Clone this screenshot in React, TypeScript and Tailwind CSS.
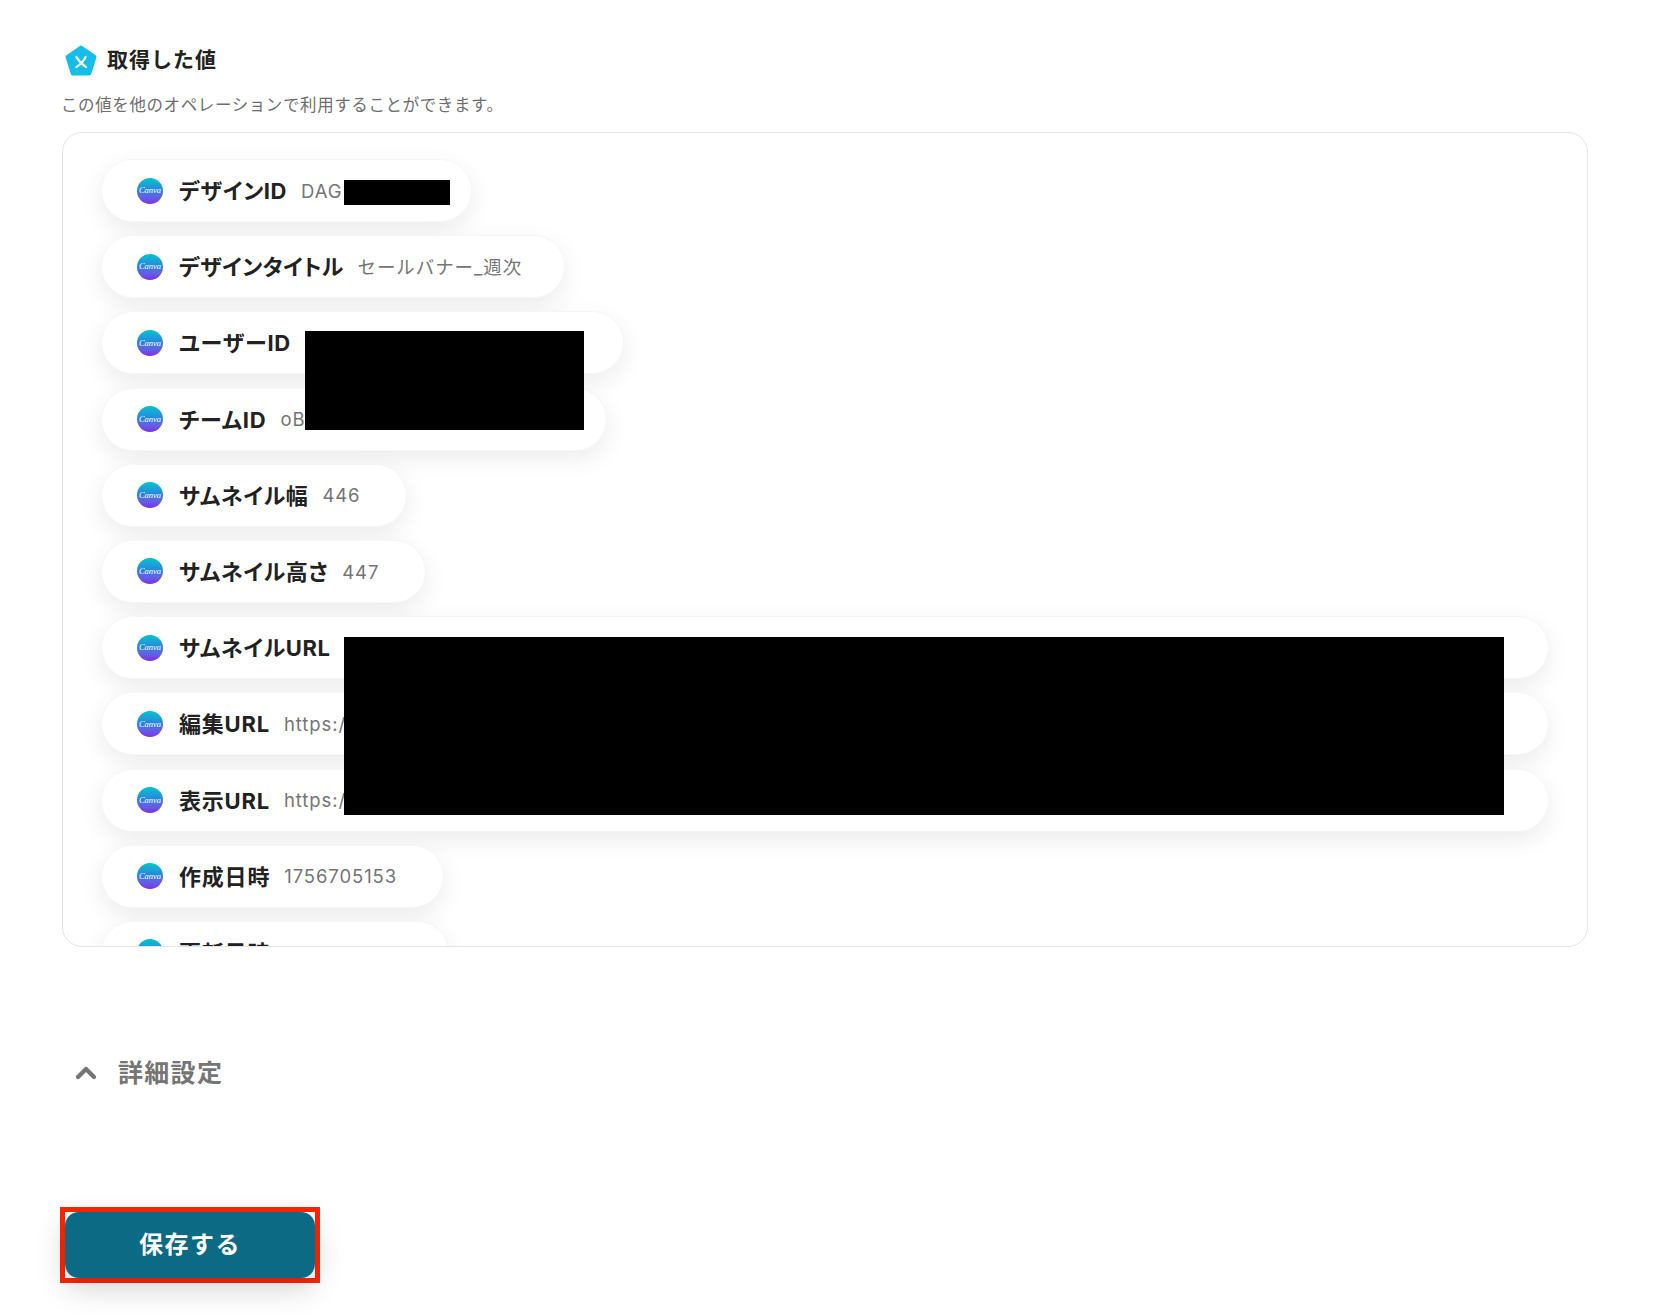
import React from 'react';
import { ChevronUp } from 'lucide-react';

const rows = [
  { label: 'デザインID', value: 'DAG', width: 'w-[371px]', tracking: 'tracking-[0.6px]' },
  { label: 'デザインタイトル', value: 'セールバナー_週次', width: 'w-[464px]', tracking: 'tracking-[0.3px]' },
  { label: 'ユーザーID', value: '', width: 'w-[523px]', tracking: 'tracking-[0.8px]' },
  { label: 'チームID', value: 'oB', width: 'w-[506px]', tracking: 'tracking-[0.8px]' },
  { label: 'サムネイル幅', value: '446', width: 'w-fit', tracking: 'tracking-[0.6px]' },
  { label: 'サムネイル高さ', value: '447', width: 'w-fit', tracking: 'tracking-[0.6px]' },
  { label: 'サムネイルURL', value: '', width: 'w-full', tracking: 'tracking-[0.6px]' },
  { label: '編集URL', value: 'https:/', width: 'w-full', tracking: 'tracking-[0.8px]' },
  { label: '表示URL', value: 'https:/', width: 'w-full', tracking: 'tracking-[0.8px]' },
  { label: '作成日時', value: '1756705153', width: 'w-fit', tracking: 'tracking-[0.8px]' },
  { label: '更新日時', value: '1756708800', width: 'w-fit', tracking: 'tracking-[0.8px]' },
];

const CanvaIcon = () => (
  <span className="flex h-[26px] w-[26px] shrink-0 items-center justify-center rounded-full bg-gradient-to-b from-[#00c4cc] via-[#2a7fe0] to-[#7d2ae8]">
    <span className="font-['Liberation_Serif',serif] text-[8.5px] leading-none text-white italic">Canva</span>
  </span>
);

export default function App() {
  return (
    <div className="min-h-[1314px] bg-white pt-[45px] pl-[62px] font-['Inter','Noto_Sans_CJK_JP',sans-serif]">
      {/* Header */}
      <div className="flex items-center gap-[10px] pl-[3px]">
        <svg width="32" height="32" viewBox="0 0 31 31">
          <path d="M15.5 2.5 L28.5 11.5 L23.5 27.5 H7.5 L2.5 11.5 Z" fill="#17bde9" stroke="#17bde9" strokeWidth="4" strokeLinejoin="round" />
          <path d="M11 11.5 C13 15 15.5 18 20.5 21.5 M20 11.5 C18.5 15 16 18 11 21.5" fill="none" stroke="#fff" strokeWidth="2" strokeLinecap="round" />
        </svg>
        <h2 className="pb-[2px] text-[21px] leading-[30px] font-bold tracking-[1px] text-[#222]">取得した値</h2>
      </div>
      <p className="mt-[16px] -ml-px text-[16.5px] leading-[24px] tracking-[0.6px] text-[#6f6f6f]">この値を他のオペレーションで利用することができます。</p>

      {/* Values panel */}
      <div className="relative mt-[15px] h-[815px] w-[1526px] overflow-hidden rounded-[20px] border border-[#e4e4e4] bg-white">
        <div className="flex flex-col gap-[13.2px] px-[38px] pt-[26px]">
          {rows.map((row) => (
            <div
              key={row.label}
              className={`flex h-[63px] shrink-0 items-center rounded-full border border-[#f6f6f6] bg-white pr-[46px] pl-[35px] whitespace-nowrap shadow-[0_8px_24px_rgba(0,0,0,0.08)] ${row.width}`}
            >
              <CanvaIcon />
              <span className={`mt-[2px] ml-[16px] shrink-0 text-[22px] font-bold text-[#222] [font-feature-settings:'palt'] ${row.tracking}`}>{row.label}</span>
              <span className="mt-[2px] ml-[14px] shrink-0 text-[18.5px] tracking-[0.9px] text-[#757575]">{row.value}</span>
            </div>
          ))}
        </div>
        {/* Redactions */}
        <div className="absolute top-[47px] left-[281px] h-[25px] w-[106px] bg-black" />
        <div className="absolute top-[198px] left-[242px] h-[99px] w-[279px] bg-black" />
        <div className="absolute top-[504px] left-[281px] h-[178px] w-[1160px] bg-black" />
      </div>

      {/* Advanced settings */}
      <div className="mt-[108px] flex items-center gap-[16px] pl-[8px]">
        <ChevronUp size={32} strokeWidth={3.2} className="text-[#757575]" />
        <span className="text-[25px] leading-[36px] font-bold tracking-[1.3px] text-[#757575]">詳細設定</span>
      </div>

      {/* Save */}
      <div className="mt-[116px] h-[76px] w-[260px] -translate-x-[2px] border-[5px] border-[#ff2600] bg-white">
        <button className="flex h-full w-full items-center justify-center rounded-[14px] bg-[#0d6a85] text-[24px] font-semibold tracking-[1.5px] text-white shadow-[0_10px_30px_rgba(0,0,0,0.18)]">
          保存する
        </button>
      </div>
    </div>
  );
}
